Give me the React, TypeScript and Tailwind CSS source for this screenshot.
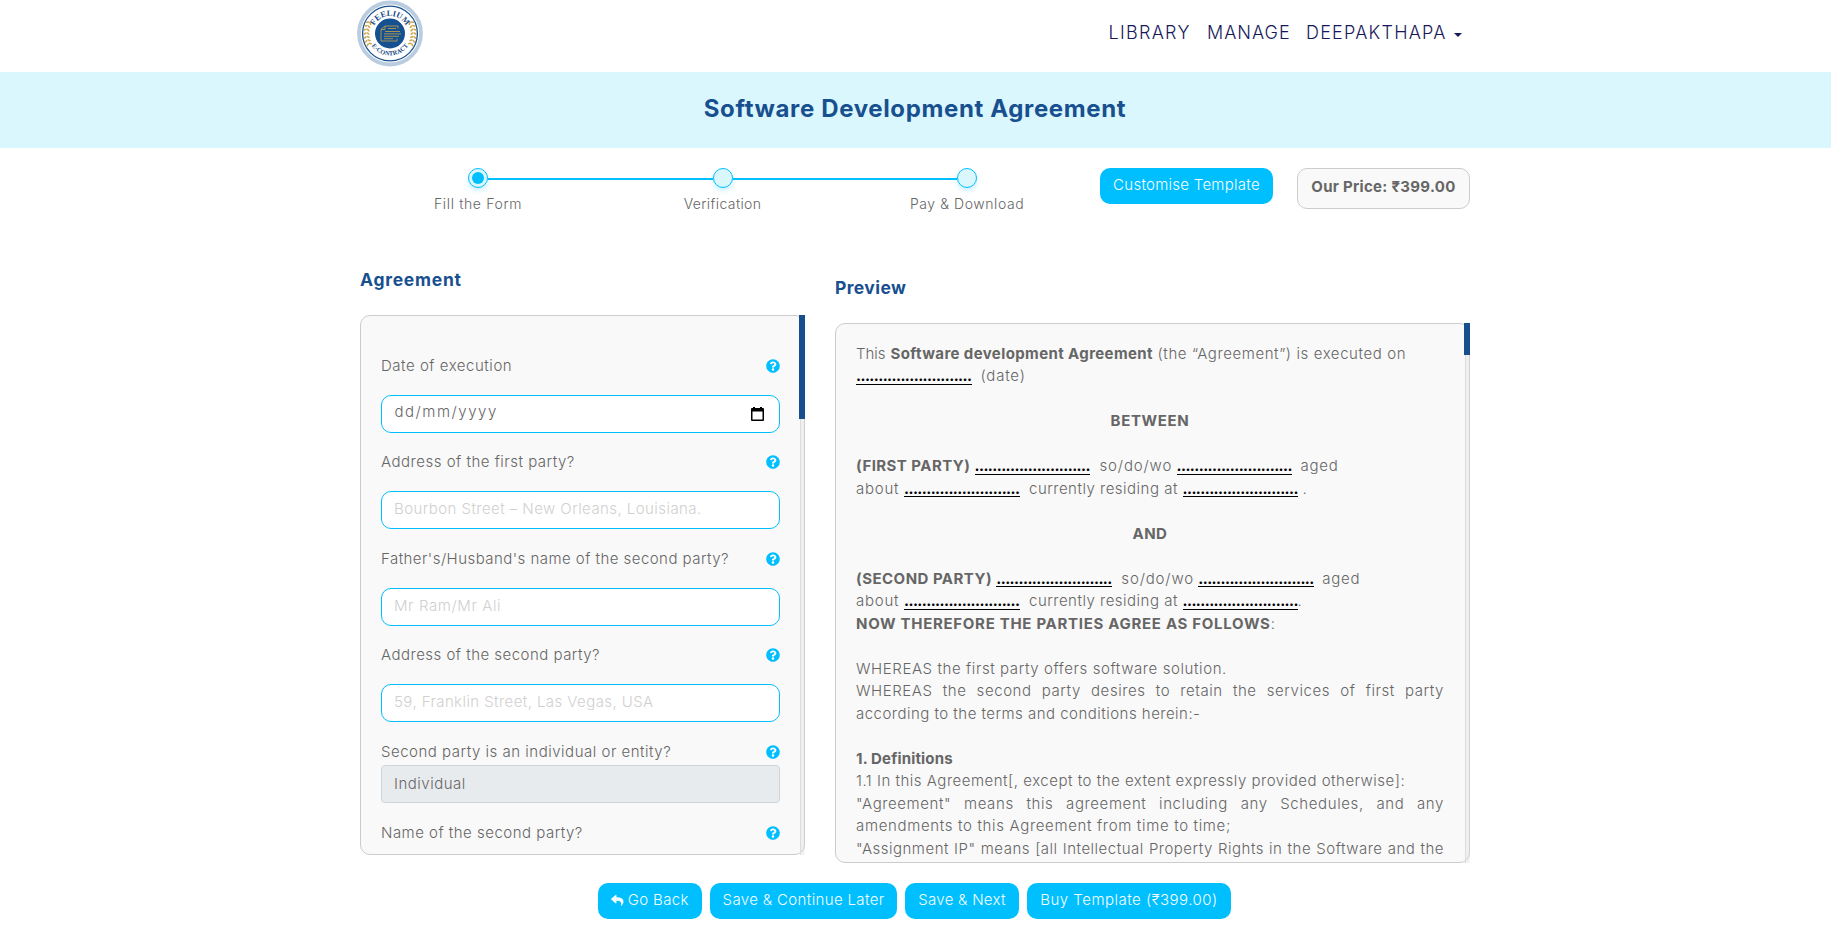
import React from "react";
import { FaQuestionCircle, FaReply } from "react-icons/fa";

function Logo() {
  const leaves = [-27, -18, -9, 0, 9, 18, 27];
  return (
    <svg width="66" height="67" viewBox="-33 -33.5 66 67" className="block">
      <defs>
        <path id="arcTop" d="M-17.6 0A17.6 17.6 0 0 1 17.6 0" />
        <path id="arcBottom" d="M-22 0A22 22 0 0 0 22 0" />
      </defs>
      <circle r="31" fill="#fff" stroke="#b9cce0" strokeWidth="3.8" />
      <circle r="27.4" fill="#fff" stroke="#1a5290" strokeWidth="1.3" />
      <circle r="15" fill="#155190" />
      <text fill="#1a4b86" fontSize="8.2" fontWeight="700" fontFamily="Liberation Serif, serif" textAnchor="middle">
        <textPath href="#arcTop" startOffset="50%" textLength="39" lengthAdjust="spacingAndGlyphs">FEELIUM</textPath>
      </text>
      <text fill="#1a4b86" fontSize="6.4" fontWeight="700" fontFamily="Liberation Serif, serif" textAnchor="middle">
        <textPath href="#arcBottom" startOffset="50%" textLength="43" lengthAdjust="spacingAndGlyphs">E-CONTRACT</textPath>
      </text>
      {[1, -1].map((s) => (
        <g key={s} transform={`scale(${s} 1)`} fill="#d0a448">
          {leaves.map((a) => (
            <g key={a} transform={`rotate(${a})`}>
              <ellipse cx="22" cy="0" rx="1.8" ry="0.85" transform="rotate(-35 22 0)" />
              <ellipse cx="25" cy="0" rx="1.8" ry="0.85" transform="rotate(35 25 0)" />
            </g>
          ))}
        </g>
      ))}
      <g fill="none" stroke="#b99a4e" strokeWidth="0.9">
        <path d="M-5 -7.5H8V-5M-5 -7.5L-9 -4V7.5H7V5M-5 -7.5V-4H-9" />
        <path d="M-2 -5H6M-5 -2H10M-6 0.4H11M-6 2.8H9M-6 5.2H3" />
      </g>
    </svg>
  );
}

function Step({ label, tracking, active, left, right }: { label: string; tracking: string; active?: boolean; left?: boolean; right?: boolean }) {
  return (
    <div className="flex w-[244.5px] flex-col items-center">
      <div className="flex w-full items-center">
        <div className={left ? "h-[2px] flex-1 translate-y-px bg-[#00bfff]" : "flex-1"} />
        <div className="flex size-5 items-center justify-center rounded-full border border-[#00bfff] bg-[#daf7fe] shadow-[0_3px_5px_rgba(0,191,255,0.2)]">
          {active && <div className="size-3 rounded-full bg-[#00bfff]" />}
        </div>
        <div className={right ? "h-[2px] flex-1 translate-y-px bg-[#00bfff]" : "flex-1"} />
      </div>
      <span className={`mt-[4.5px] text-[14px] leading-[21px] ${tracking}`}>{label}</span>
    </div>
  );
}

function Scrollbar({ thumb }: { thumb: string }) {
  return (
    <div className="absolute -top-px -right-px -bottom-px w-[6px]">
      <div className="absolute inset-y-0 right-0 w-[5px] border-x border-l-[#dcdcdc] border-r-transparent bg-[#d8d8d8]/30" />
      <div className={`absolute top-0 right-0 w-[6px] bg-[#174f8e] ${thumb}`} />
    </div>
  );
}

function Label({ text, tracking }: { text: string; tracking: string }) {
  return (
    <div className="flex h-[22.5px] items-center justify-between leading-[22.5px]">
      <span className={tracking}>{text}</span>
      <FaQuestionCircle size={14} color="#00bfff" className="-mt-px" />
    </div>
  );
}

function TextField({ placeholder, tracking }: { placeholder: string; tracking: string }) {
  return (
    <input
      placeholder={placeholder}
      className={`mt-[17.5px] mb-[18.5px] block h-[38px] w-full rounded-[10px] border border-[#00bfff] bg-white px-3 pb-[3px] placeholder:text-[#d0d0d0] ${tracking}`}
    />
  );
}

function CalendarIcon() {
  return (
    <svg width="13" height="14" viewBox="0 0 13 14" className="mt-px">
      <path fill="#000" fillRule="evenodd" d="M2 0H4V1H9V0H11V1H12Q13 1 13 2V13Q13 14 12 14H1Q0 14 0 13V2Q0 1 1 1H2ZM1.5 4.5V12.5H11.5V4.5Z" />
    </svg>
  );
}

function Blank({ w }: { w: string }) {
  return (
    <span className={`shrink-0 ${w}`}>
      <span className="inline-block h-[19.5px] w-[115.5px] overflow-hidden border-b border-black align-top font-bold leading-[22.5px] tracking-[-0.57px] text-black">
        ..........................
      </span>
    </span>
  );
}

function Button({ w, children }: { w: string; children: React.ReactNode }) {
  return (
    <button className={`flex h-9 items-center justify-center rounded-[10px] bg-[#00bfff] pb-[2px] whitespace-nowrap text-[#f4fcff] ${w}`}>
      {children}
    </button>
  );
}

const Gap = () => <div className="h-[22.5px]" />;

export default function App() {
  return (
    <div className="h-[939px] overflow-hidden bg-white font-['Inter',sans-serif] text-[15px] font-[350] text-[#666]">
      <header className="mx-auto flex h-[72px] w-[1110px] items-start justify-between">
        <div className="-ml-[3.5px]">
          <Logo />
        </div>
        <nav className="flex w-[362px] pt-[19px] text-[18px] leading-[27px] whitespace-nowrap text-[#17195c]">
          <span className="w-[98.5px] tracking-[1.3px]">LIBRARY</span>
          <span className="w-[99px] tracking-[1px]">MANAGE</span>
          <span className="w-[147.5px] tracking-[1.23px]">DEEPAKTHAPA</span>
          <svg width="8" height="4" viewBox="0 0 8 4" className="mt-[13.5px]">
            <path d="M0 0H8L4 4Z" fill="#17195c" />
          </svg>
        </nav>
      </header>

      <div className="flex h-[76px] items-center justify-center bg-[#daf7fe] pr-px pb-[2px]">
        <h1 className="text-[24px] leading-9 font-bold tracking-[0.64px] text-[#18508f]">Software Development Agreement</h1>
      </div>

      <section className="mx-auto flex h-[120px] w-[1110px] items-start pt-5">
        <div className="-ml-[4.7px] flex">
          <Step label="Fill the Form" tracking="tracking-[0.65px]" active right />
          <Step label="Verification" tracking="tracking-[0.4px]" left right />
          <Step label="Pay & Download" tracking="tracking-[0.57px]" left />
        </div>
        <div className="ml-[10.7px] flex gap-6">
          <Button w="w-[173px] tracking-[0.27px]">Customise Template</Button>
          <div className="flex h-[41px] w-[173px] items-center justify-center rounded-[10px] border border-[#ccc] bg-[#f9f9f9] pb-[3px] font-bold tracking-[0.3px] whitespace-nowrap">
            Our Price: ₹399.00
          </div>
        </div>
      </section>

      <main className="mx-auto flex h-[615px] w-[1111px] justify-between pr-px">
        <section className="w-[445px]">
          <h2 className="h-[47px] text-[17.5px] leading-[24px] font-bold tracking-[0.75px] text-[#18508f]">Agreement</h2>
          <div className="relative h-[540px] rounded-[10px] border border-[#ccc] bg-[#f9f9f9]">
            <div className="h-full overflow-hidden rounded-[9px] pt-[38.75px] pr-6 pl-5">
              <Label text="Date of execution" tracking="tracking-[0.53px]" />
              <div className="mt-[17.5px] mb-[18.5px] flex h-[38px] items-center justify-between rounded-[10px] border border-[#00bfff] bg-white pr-[15px] pl-[12.5px]">
                <span className="pb-[4px] tracking-[1.52px]">dd/mm/yyyy</span>
                <CalendarIcon />
              </div>
              <Label text="Address of the first party?" tracking="tracking-[0.5px]" />
              <TextField placeholder="Bourbon Street – New Orleans, Louisiana." tracking="tracking-[0.44px]" />
              <Label text="Father's/Husband's name of the second party?" tracking="tracking-[0.46px]" />
              <TextField placeholder="Mr Ram/Mr Ali" tracking="tracking-[0.6px]" />
              <Label text="Address of the second party?" tracking="tracking-[0.48px]" />
              <TextField placeholder="59, Franklin Street, Las Vegas, USA" tracking="tracking-[0.42px]" />
              <Label text="Second party is an individual or entity?" tracking="tracking-[0.51px]" />
              <div className="mt-[2px] mb-[18.5px] flex h-[38px] items-center rounded-[4px] border border-[#ced4da] bg-[#e8ebee] px-3 pb-px tracking-[0.5px]">
                Individual
              </div>
              <Label text="Name of the second party?" tracking="tracking-[0.49px]" />
            </div>
            <Scrollbar thumb="h-[104px]" />
          </div>
        </section>

        <section className="w-[635px] pt-2">
          <h2 className="h-[47px] text-[17.5px] leading-[24px] font-bold tracking-[0.4px] text-[#18508f]">Preview</h2>
          <div className="relative h-[540px] rounded-[10px] border border-[#ccc] bg-[#f9f9f9]">
            <div className="h-full overflow-hidden rounded-[9px] pt-[18.75px] pr-[25px] pl-5 leading-[22.5px] whitespace-nowrap">
              <div className="flex">
                <span className="w-[34.5px]">This</span>
                <strong className="w-[267px] tracking-[0.39px]">Software development Agreement</strong>
                <span className="tracking-[0.59px]">(the “Agreement”) is executed on</span>
              </div>
              <div className="flex">
                <Blank w="w-[124.5px]" />
                <span className="tracking-[0.8px]">(date)</span>
              </div>
              <Gap />
              <div className="text-center font-bold tracking-[0.65px]">BETWEEN</div>
              <Gap />
              <div className="flex">
                <strong className="w-[118.5px] tracking-[0.45px]">(FIRST PARTY)</strong>
                <Blank w="w-[125px]" />
                <span className="w-[77px] tracking-[0.85px]">so/do/wo</span>
                <Blank w="w-[124px]" />
                <span className="tracking-[0.75px]">aged</span>
              </div>
              <div className="flex">
                <span className="w-[48px] tracking-[0.75px]">about</span>
                <Blank w="w-[125px]" />
                <span className="w-[153.5px] tracking-[0.5px]">currently residing at</span>
                <Blank w="w-[120px]" />
                <span>.</span>
              </div>
              <Gap />
              <div className="text-center font-bold tracking-[0.45px]">AND</div>
              <Gap />
              <div className="flex">
                <strong className="w-[140.3px] tracking-[0.48px]">(SECOND PARTY)</strong>
                <Blank w="w-[125px]" />
                <span className="w-[77px] tracking-[0.85px]">so/do/wo</span>
                <Blank w="w-[124px]" />
                <span className="tracking-[0.75px]">aged</span>
              </div>
              <div className="flex">
                <span className="w-[48px] tracking-[0.75px]">about</span>
                <Blank w="w-[125px]" />
                <span className="w-[153.5px] tracking-[0.5px]">currently residing at</span>
                <Blank w="w-[115px]" />
                <span>.</span>
              </div>
              <div className="tracking-[0.7px]">
                <strong>NOW THEREFORE THE PARTIES AGREE AS FOLLOWS</strong>:
              </div>
              <Gap />
              <div className="tracking-[0.59px]">WHEREAS the first party offers software solution.</div>
              <div className="tracking-[0.57px] [text-align-last:justify]">WHEREAS the second party desires to retain the services of first party</div>
              <div className="tracking-[0.48px]">according to the terms and conditions herein:-</div>
              <Gap />
              <div className="font-bold tracking-[0.17px]">1. Definitions</div>
              <div className="tracking-[0.51px]">1.1 In this Agreement[, except to the extent expressly provided otherwise]:</div>
              <div className="tracking-[0.6px] [text-align-last:justify]">"Agreement" means this agreement including any Schedules, and any</div>
              <div className="tracking-[0.66px]">amendments to this Agreement from time to time;</div>
              <div className="tracking-[0.5px] [text-align-last:justify]">"Assignment IP" means [all Intellectual Property Rights in the Software and the</div>
            </div>
            <Scrollbar thumb="h-[32px]" />
          </div>
        </section>
      </main>

      <footer className="flex justify-center gap-2 pr-[2px]">
        <Button w="w-[104px] tracking-[0.32px]">
          <FaReply size={12.5} className="mr-[4px]" />
          Go Back
        </Button>
        <Button w="w-[187px] tracking-[0.36px]">Save & Continue Later</Button>
        <Button w="w-[114px] tracking-[0.26px]">Save & Next</Button>
        <Button w="w-[204px] tracking-[0.49px]">Buy Template (₹399.00)</Button>
      </footer>
    </div>
  );
}
